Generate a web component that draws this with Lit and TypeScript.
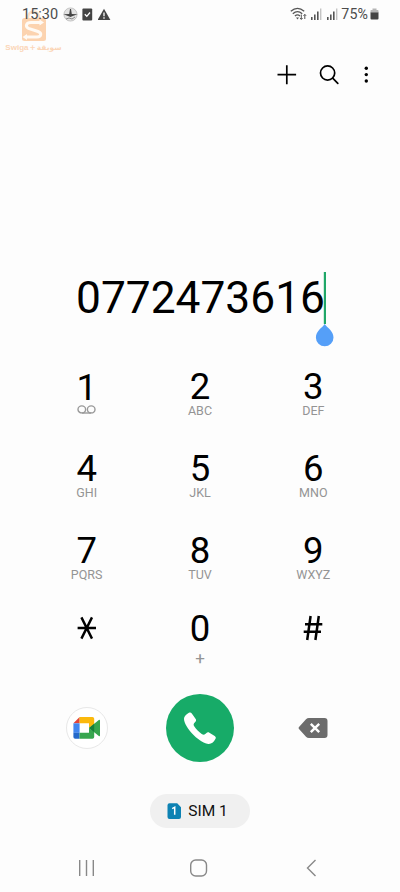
import { LitElement, html, svg, css } from "lit";
import { customElement } from "lit/decorators.js";

const KEYS: [string, string][] = [
  ["1", "vm"], ["2", "ABC"], ["3", "DEF"],
  ["4", "GHI"], ["5", "JKL"], ["6", "MNO"],
  ["7", "PQRS"], ["8", "TUV"], ["9", "WXYZ"],
  ["*", ""], ["0", "+"], ["#", ""],
];

const voicemail = html`<svg class="vm" width="19" height="9" viewBox="0 0 19 9" fill="none" stroke="#999" stroke-width="1.4">
  <ellipse cx="4.8" cy="4.4" rx="3.8" ry="3.5"/><ellipse cx="14.2" cy="4.4" rx="3.8" ry="3.5"/><path d="M4.8 8H14.2"/></svg>`;

const star = html`<svg class="star" width="20" height="24" viewBox="0 0 20 24" fill="none" stroke="#000" stroke-width="2.4">
  <path d="M.6 12H19M4.400 1.400L15 22.600M15 1.400L4.400 22.600"/></svg>`;

const hash = html`<svg class="hash" width="20" height="26" viewBox="0 0 20 26" fill="none" stroke="#000" stroke-width="2.500">
  <path d="M2 9.200H19.300M.7 16.800H18M7.600 1L4.200 25M15.800 1L12.400 25"/></svg>`;

const bars = () => svg`<path d="M1 9h1.600v3H1zM4 6.400h1.600V12H4zM7 3.600h1.600V12H7z" fill="#555"/><path d="M10 .6h1.400V12H10z" fill="#c4c4c4"/>`;

@customElement("app-root")
export class AppRoot extends LitElement {
  static styles = css`
    :host { display: flex; flex-direction: column; position: relative; width: 400px; height: 892px;
      background: #fdfdfd; font-family: Roboto, sans-serif; color: #000; overflow: hidden; }
    svg { display: block; flex: none; }
    .status { height: 28px; display: flex; align-items: center; padding: 0 21px 0 22px; color: #4c4c4c; font-size: 14.5px; position: relative; z-index: 1; }
    .left { display: flex; align-items: center; gap: 4.5px; flex: 1; }
    .right { display: flex; align-items: center; gap: 3.5px; font-size: 14.2px; }
    .pct { margin-right: -1.5px; letter-spacing: 0.1px; }
    .mark { position: absolute; left: 4px; top: 10px; width: 59px; text-align: center; color: #fbd6b8; }
    .mark svg { margin: 0 auto; }
    .brand { display: flex; justify-content: center; align-items: baseline; gap: 1px; font: 700 7.5px/12px "DejaVu Sans", sans-serif; white-space: nowrap; }
    .latin { font: 700 8px/12px "Liberation Sans", sans-serif; }
    .tools { height: 94px; display: flex; align-items: center; justify-content: flex-end; box-sizing: border-box; padding: 0 30px 0 0; }
    .add { margin-right: 22px; }
    .find { margin-right: 23px; }
    .display { height: 84px; margin-top: 148px; padding-left: 76px; display: flex; align-items: flex-start; position: relative; }
    .number { font-size: 44.3px; line-height: 52px; padding-top: 2px; }
    .caret { position: absolute; left: 315px; top: 1px; }
    .pad { display: grid; grid-template-columns: repeat(3, 1fr); grid-template-rows: 82px 82px 82px 82px; padding: 0 30px; margin-top: 12px; }
    .key { display: flex; flex-direction: column; align-items: center; }
    .digit { font-size: 36.5px; line-height: 32px; margin-top: 5px; }
    .key:first-child .digit { position: relative; top: 1px; }
    .key:nth-child(n + 10) .digit { margin-top: 1px; }
    .sub { font-size: 12.5px; line-height: 14px; margin-top: 1px; color: #949494; }
    .plus { font-size: 17px; line-height: 20px; margin-top: 3px; }
    .vm { margin-top: 2px; }
    .star { margin-top: 4px; }
    .hash { margin-top: 3px; }
    .actions { display: grid; grid-template-columns: repeat(3, 1fr); padding: 0 30px; height: 68px; align-items: center; justify-items: center; }
    .meet { width: 40px; height: 40px; border: 1px solid #e8e8e8; border-radius: 50%; background: #fff; display: grid; place-items: center; }
    .call { width: 68px; height: 68px; border-radius: 50%; background: #17ab68; }
    .sim { align-self: center; width: 100px; height: 34px; margin-top: 32px; border-radius: 17px; background: #f0f0f0; display: flex; align-items: center; justify-content: center; box-sizing: border-box; padding-right: 5px; gap: 6px; font-size: 15.5px; color: #111; }
    .nav { display: grid; grid-template-columns: repeat(3, 1fr); margin-top: 28px; padding: 0 30px; height: 24px; align-items: center; justify-items: center; }
  `;

  render() {
    return html`
      <div class="mark">
        <svg width="26" height="32" viewBox="0 0 26 32">
          <path d="M7 10V7a5.500 5.500 0 0 1 11 0v3" fill="none" stroke="#fde0c8" stroke-width="2.500"/>
          <rect x="1" y="8" width="24" height="23" rx="2.500" fill="#fcd3af"/>
          <path d="M19.500 12.500H10c-5 0-6 4-2.500 5.800L17 21.500c4 1.500 3.500 5.500-1 5.500H5" fill="none" stroke="#fffaf4" stroke-width="3"/>
          <path d="M18.500 9.500l4.500 3-4.500 3zM6 24l-4.500 3L6 30z" fill="#fffaf4"/>
        </svg>
        <div class="brand"><span class="latin">Swiga</span><span>+</span><span>سويقة</span></div>
      </div>
      <div class="status">
        <div class="left">
          <span>15:30</span>
          <svg width="15" height="15" viewBox="0 0 15 15"><circle cx="7.500" cy="7.500" r="6.600" fill="#e2e2e2" stroke="#aaa" stroke-width=".6"/><path d="M.5 7.300L6.200 7 7 2h1l.8 5 5.700.3-4.700 1.800L7.500 10 5 9.100z" fill="#454545"/><path d="M3 12l3-1 3 1 3-2" fill="none" stroke="#888"/></svg>
          <svg width="11" height="13" viewBox="0 0 11 13"><rect x=".4" y=".5" width="9.800" height="12" rx="1" fill="#444"/><path d="M2.800 6.300l2 2L8 4.500" fill="none" stroke="#fff" stroke-width="1.300"/></svg>
          <svg width="14" height="13" viewBox="0 0 14 13"><path d="M6 .8L12.400 12H-.4z" fill="#444"/><path d="M6 4.400v3.800M6 9.300v1.400" stroke="#fff" stroke-width="1.300"/></svg>
        </div>
        <div class="right">
          <svg width="17" height="14" viewBox="0 0 17 14" fill="none" stroke="#555" stroke-width="1.300"><path d="M.8 4.300Q7.500-1.500 14.200 4.300M2.800 6.700Q7.500 2.600 12.200 6.700M4.900 9Q7.500 6.800 10 9"/><path d="M6 10.400h3l-1.500 2z" fill="#555" stroke="none"/><path d="M11.300 7.500v4.800M10 11l1.300 1.400 1.300-1.400M14.800 12V7.500M13.500 8.800l1.300-1.400 1.300 1.400" stroke-width="1"/></svg>
          <svg width="12" height="12" viewBox="0 0 12 12">${bars()}</svg>
          <svg width="12" height="12" viewBox="0 0 12 12">${bars()}</svg>
          <span class="pct">75%</span>
          <svg width="9" height="12" viewBox="0 0 9 12"><path d="M2.500.5h4V2h1.200q.8 0 .8.8V5h-8V2.800Q.5 2 1.300 2h1.200z" fill="#b5b5b5"/><path d="M.5 4.500h8v6q0 1-1 1h-6q-1 0-1-1z" fill="#444"/></svg>
        </div>
      </div>
      <div class="tools">
        <svg class="add" width="20" height="20" viewBox="0 0 20 20" stroke="#000" stroke-width="1.700"><path d="M.5 9.700h18.600M9.800 .3v19"/></svg>
        <svg class="find" width="20" height="20" viewBox="0 0 20 20" fill="none" stroke="#000" stroke-width="1.700"><circle cx="8.600" cy="8" r="7.100"/><path d="M13.700 13.200l5.100 5.100" stroke-linecap="round"/></svg>
        <svg class="dots" width="8" height="18" viewBox="0 0 8 18"><circle cx="4.300" cy="2.300" r="1.700"/><circle cx="4.300" cy="8.600" r="1.700"/><circle cx="4.300" cy="15" r="1.700"/></svg>
      </div>
      <div class="display">
        <span class="number">0772473616</span>
        <svg class="caret" width="20" height="78" viewBox="0 0 20 78"><path d="M9.900 1v52" stroke="#20a768" stroke-width="2.200"/><path d="M9.700 53C12.500 57 18.500 60 18.500 66.500a8.800 8.800 0 0 1-17.600 0C.9 60 6.900 57 9.700 53z" fill="#559ff8"/></svg>
      </div>
      <div class="pad">
        ${KEYS.map(([d, s]) => html`<div class="key">
          ${d === "*" ? star : d === "#" ? hash : html`<span class="digit">${d}</span>`}
          ${s === "vm" ? voicemail : s ? html`<span class="sub ${s === "+" ? "plus" : ""}">${s}</span>` : ""}
        </div>`)}
      </div>
      <div class="actions">
        <div class="meet">
          <svg width="28" height="24" viewBox="0 0 28 24">
            <path d="M.4 7.300L6.600 1v6.300z" fill="#e2443a"/><path d="M.4 7.300h6.200v9.500H.4z" fill="#4286ef"/>
            <path d="M.4 16.800h6.200v6H2.200q-1.800 0-1.800-1.800z" fill="#2468ca"/>
            <path d="M6.600 1h12.800q1.800 0 1.800 1.800V8l-5.200 4V7.300H6.600z" fill="#fbb90c"/>
            <path d="M6.600 16.800H16V12l5.200 4v5q0 1.800-1.800 1.800H6.600z" fill="#37a64f"/>
            <path d="M16 12l9.800-8q1.200-.7 1.200.7v14.600q0 1.400-1.200.7z" fill="#36a54e"/><path d="M16 12l5.200-4.300v8.600z" fill="#168039"/>
          </svg>
        </div>
        <div class="call"><svg width="68" height="68" viewBox="0 0 68 68"><path d="M18 25c0-2.500 1.600-4.300 4.900-6.200 1.200-.7 2.200-.3 2.900.7l3.900 5.600c.7 1.200.4 2.200-.7 3.200-1.600 1.300-1.700 2.600-.8 4 2 3 4.700 5.700 7.500 7.600 1.700 1.100 3.100 1 4.500-.6 1-1.100 2-1.300 3.200-.6l5.300 3.400c1.200.8 1.400 1.800.7 3-1.900 3.400-4 5-6.700 4.900-4-.2-9.400-3.400-14.900-8.800-6-6-9.800-12.200-9.800-16.200z" fill="#fff"/></svg></div>
        <svg width="30" height="20" viewBox="0 0 30 20"><path d="M1 9L8 1.300Q9.200 0 11 0h15.500Q29.500 0 29.500 3v14q0 3-3 3H11q-1.800 0-3-1.300L1 11q-1-1 0-2z" fill="#6c6c6c"/><path d="M12.800 5.800l8.400 8.400M21.200 5.800l-8.400 8.400" stroke="#fff" stroke-width="2.400"/></svg>
      </div>
      <div class="sim">
        <svg width="15" height="17" viewBox="0 0 15 17"><path d="M2.500.3h7.700l3.800 4V14q0 2-2 2H2.500q-2 0-2-2V2.300q0-2 2-2z" fill="#0d82b3"/><path d="M5.200 5.700l2.500-1.500v7.500" fill="none" stroke="#fff" stroke-width="1.500"/></svg>
        <span>SIM 1</span>
      </div>
      <div class="nav">
        <svg width="18" height="18" viewBox="0 0 18 18" stroke="#888" stroke-width="1.400"><path d="M1.700 1v16M8.500 1v16M15.300 1v16"/></svg>
        <svg width="20" height="18" viewBox="0 0 20 18" fill="none" stroke="#888" stroke-width="1.400"><rect x=".7" y="1" width="15.800" height="16" rx="5"/></svg>
        <svg width="14" height="18" viewBox="0 0 14 18" fill="none" stroke="#888" stroke-width="1.400"><path d="M9.500 1L1.500 9l8 8"/></svg>
      </div>`;
  }
}
